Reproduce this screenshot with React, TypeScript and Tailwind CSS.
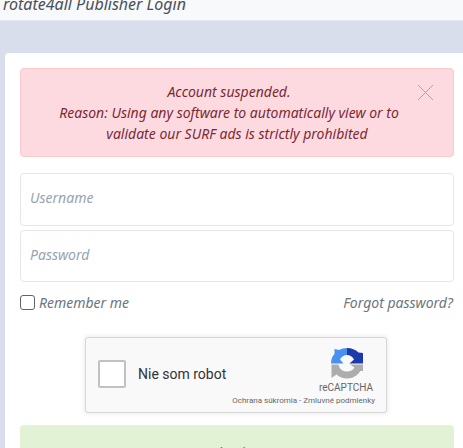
const noto = "font-['Noto_Sans',sans-serif] italic";

function RecaptchaLogo() {
  return (
    <svg width="32" height="31" viewBox="0 0 32 31" fill="none">
      {/* blue, top left */}
      <path d="M16 0V7C13 7 10.5 8.5 9 11.5L12.5 15.5H0C0 11 1.5 8 3.5 6L3.5 1L8 2C10 0.7 13 0 16 0Z" fill="#4a90f2" />
      {/* dark blue, top right */}
      <path d="M16 0C20.5 0 24.5 1.5 27.5 4.5L32 5V15.5H18.5L23 11.5C21.5 8.5 19 7 16 7V0Z" fill="#1c3aa9" />
      {/* grey, bottom */}
      <path d="M0 16.5H7.5C8.5 21 11.5 23.5 16 23.5C19.5 23.5 22 22 23.5 19.5H30.5C29.5 25.5 23.5 30.5 16 30.5C12 30.5 8.5 29 5.5 26.5L0.5 30V16.5Z" fill="#adadad" />
      <path d="M23.5 19.5L19 16.5H32V23H24Z" fill="#adadad" />
    </svg>
  );
}

function Recaptcha() {
  return (
    <div className="ml-[65px] flex h-[76px] w-[302px] items-start rounded-[3px] border border-[#d6d6d6] bg-[#f9f9f9] shadow-[0_0_4px_1px_rgba(0,0,0,0.08)] font-['Roboto',sans-serif]">
      <div className="ml-[12px] mt-[22px] h-7 w-7 rounded-[2px] border-2 border-[#c1c1c1] bg-white" />
      <span className="ml-3 mt-[28px] text-sm leading-[17px] text-[#333]">Nie som robot</span>
      <div className="ml-auto mr-[11px] mt-[10px] flex flex-col items-end">
        <div className="mr-[12px]">
          <RecaptchaLogo />
        </div>
        <span className="mr-[2px] mt-[3px] text-[10px] leading-[12px] text-[#666]">reCAPTCHA</span>
        <span className="mt-[2px] whitespace-nowrap text-[8px] leading-[10px] text-[#666]">
          Ochrana súkromia - Zmluvné podmienky
        </span>
      </div>
    </div>
  );
}

export default function App() {
  return (
    <div className="h-[448px] w-[463px] overflow-hidden bg-[#d8deeb]">
      <div className="h-[21px] overflow-hidden border-b border-[#e4e7ee] bg-[#f8f9fb] pl-[3px]">
        <span className={`${noto} -mt-[8px] block whitespace-nowrap text-base leading-[24px] text-[#495057]`}>
          rotate4all Publisher Login
        </span>
      </div>

      <div className="ml-[5px] mt-8 w-[464px] rounded-[4px] bg-white p-[15px] pb-0">
        <div className={`${noto} relative flex h-[89px] flex-col items-center justify-center rounded-[4px] border border-[#f9c9ce] bg-[#fddae0] pr-[16px] text-[14px] leading-[21px] text-[#7a2a35]`}>
          <span>Account suspended.</span>
          <span className="whitespace-nowrap">Reason: Using any software to automatically view or to</span>
          <span className="ml-4 whitespace-nowrap">validate our SURF ads is strictly prohibited</span>
          <svg className="absolute left-[396px] top-[15px]" width="17" height="17" viewBox="0 0 17 17" stroke="#a8a3a5" strokeWidth="1">
            <path d="M1 1L16 16M16 1L1 16" />
          </svg>
        </div>

        <div className={`${noto} mt-4 h-[53px] rounded-[4px] border border-[#e2e7ef] px-[9px] pt-[13px] text-[14px] leading-[21px] text-[#97a3b1]`}>
          Username
        </div>
        <div className={`${noto} mt-1 h-[52px] rounded-[4px] border border-[#e2e7ef] px-[9px] pt-[13px] text-[14px] leading-[21px] text-[#97a3b1]`}>
          Password
        </div>

        <div className={`${noto} mt-[10px] flex items-center justify-between pr-[1px] text-[14px] leading-[21px] text-[#6c757d]`}>
          <div className="flex items-center gap-1">
            <div className="h-[15px] w-[15px] rounded-[3px] border border-[#5f6368] bg-white" />
            <span>Remember me</span>
          </div>
          <span>Forgot password?</span>
        </div>

        <div className="mt-6">
          <Recaptcha />
        </div>

        <div className={`${noto} mt-3 flex h-[60px] justify-center rounded-[4px] bg-[#e1f2d5] pr-[3px] pt-[16px] text-[14px] text-[#4f7f2d]`}>
          Login
        </div>
      </div>
    </div>
  );
}
